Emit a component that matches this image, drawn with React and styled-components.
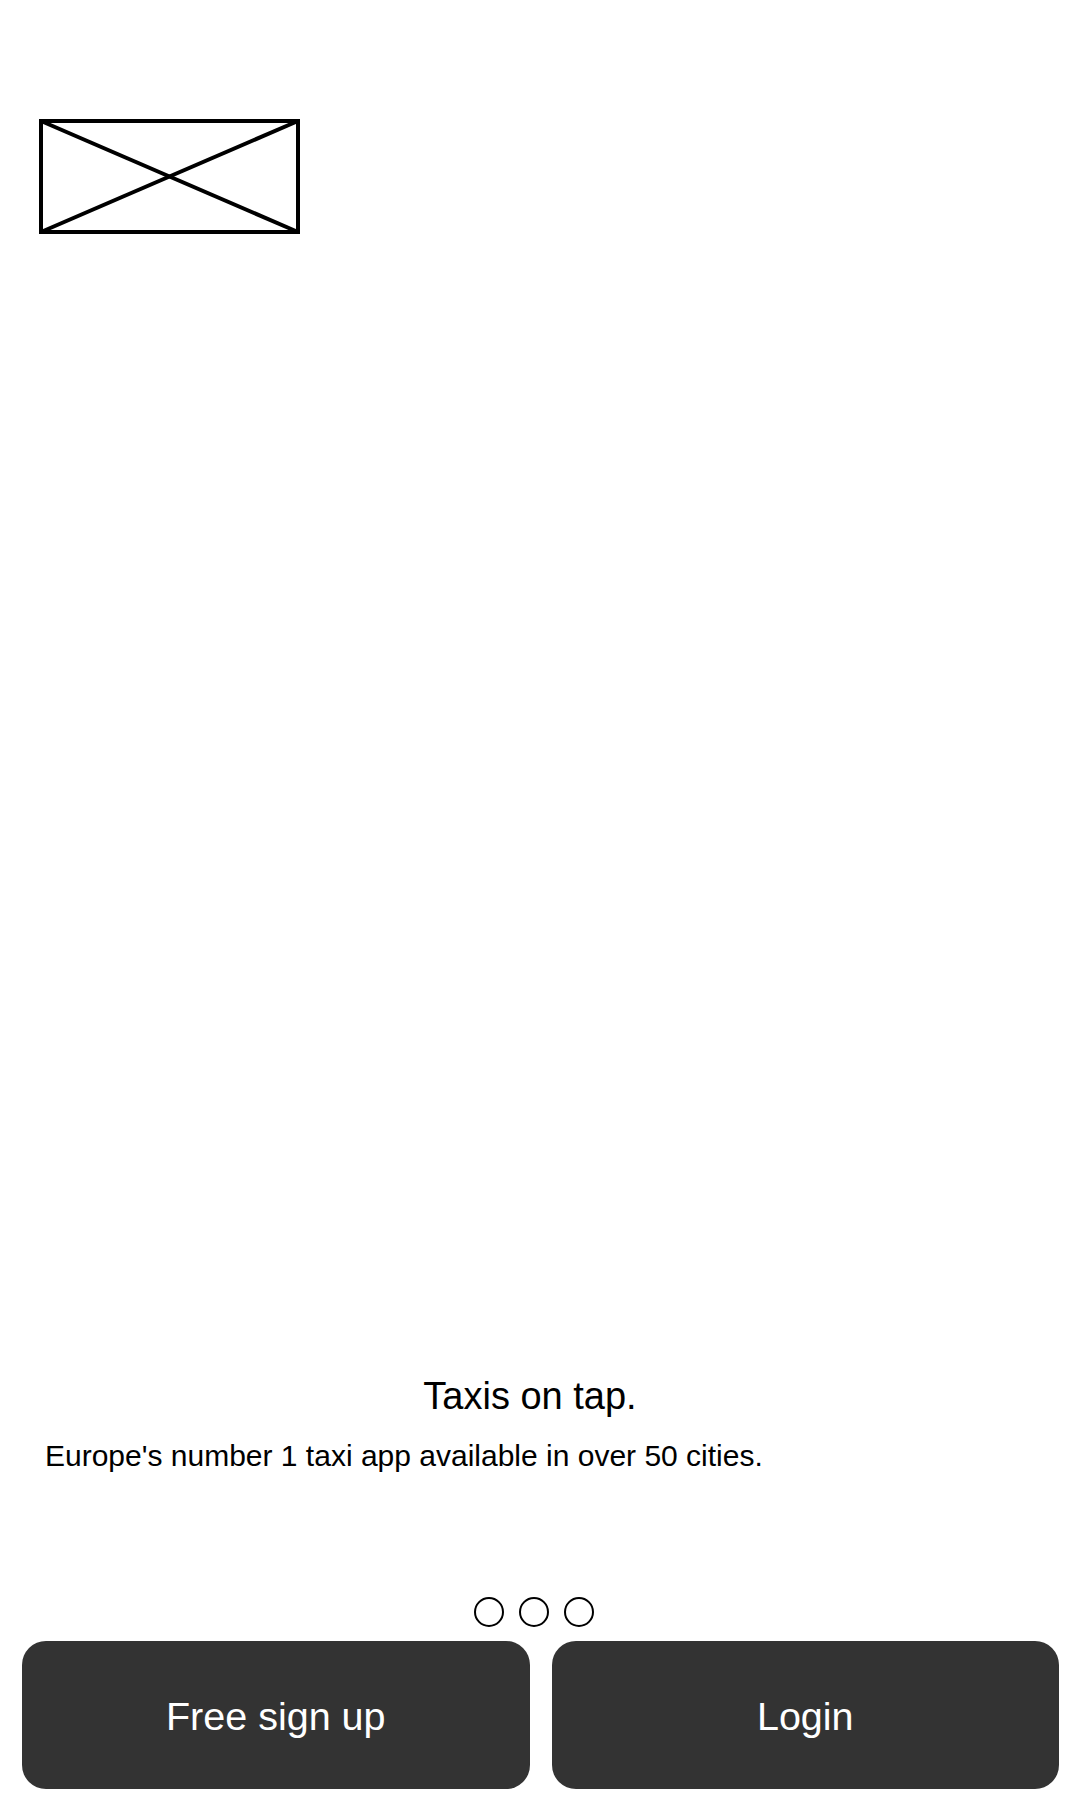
import styled, { createGlobalStyle } from "styled-components";

const GlobalStyle = createGlobalStyle`
  html, body {
    margin: 0;
    padding: 0;
    background: #ffffff;
  }
  body {
    font-family: "Liberation Sans", Arial, sans-serif;
    color: #000;
  }
`;

const Screen = styled.div`
  height: 1800px;
  display: flex;
  flex-direction: column;
  box-sizing: border-box;
  padding-bottom: 11px;
`;

const Header = styled.header`
  padding: 119px 0 0 39px;
`;

const Placeholder = styled.svg`
  display: block;
  width: 261px;
  height: 115px;
`;

const Intro = styled.section`
  margin-top: auto;
  display: flex;
  flex-direction: column;
`;

const Title = styled.h1`
  margin: 0;
  font-size: 38px;
  font-weight: 400;
  line-height: 1;
  text-align: center;
  padding-right: 20px;
`;

const Subtitle = styled.p`
  margin: 26px 0 0;
  font-size: 30px;
  line-height: 1;
  padding-left: 45px;
`;

const Dots = styled.div`
  display: flex;
  justify-content: center;
  gap: 15px;
  margin: 126px 0 14px;
  padding-right: 12px;
`;

const Dot = styled.span`
  width: 30px;
  height: 30px;
  box-sizing: border-box;
  border: 2.7px solid #000;
  border-radius: 50%;
  background: ${(p) => (p.$active ? "#000" : "transparent")};
`;

const Actions = styled.div`
  display: grid;
  grid-template-columns: 1fr 1fr;
  gap: 22px;
  padding: 0 21px 0 22px;
`;

const ActionButton = styled.button`
  height: 148px;
  padding: 2px 0 0;
  border: none;
  border-radius: 24px;
  background: #333333;
  color: #ffffff;
  font-family: "Liberation Sans", Arial, sans-serif;
  font-size: 39.5px;
  cursor: pointer;
`;

const App = () => {
  return (
    <>
      <GlobalStyle />
      <Screen>
        <Header>
          <Placeholder viewBox="0 0 261 115">
            <rect x="2" y="2" width="257" height="111" fill="none" stroke="#000" strokeWidth="4" />
            <line x1="2" y1="2" x2="259" y2="113" stroke="#000" strokeWidth="4" />
            <line x1="2" y1="113" x2="259" y2="2" stroke="#000" strokeWidth="4" />
          </Placeholder>
        </Header>
        <Intro>
          <Title>Taxis on tap.</Title>
          <Subtitle>Europe's number 1 taxi app available in over 50 cities.</Subtitle>
          <Dots>
            <Dot />
            <Dot />
            <Dot />
          </Dots>
          <Actions>
            <ActionButton>Free sign up</ActionButton>
            <ActionButton>Login</ActionButton>
          </Actions>
        </Intro>
      </Screen>
    </>
  );
};

export default App;
